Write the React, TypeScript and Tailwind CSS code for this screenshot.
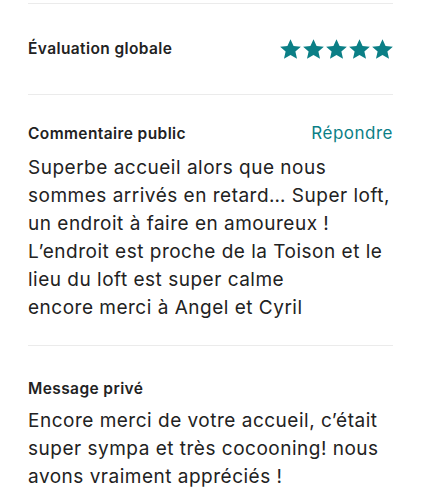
import React from "react";

const font = { fontFamily: "Inter, 'Noto Sans', sans-serif" };

function Star() {
  return (
    <svg viewBox="0 0 24 24" className="w-[23px] h-[23px]" fill="#0b7f86">
      <path d="M12 1.3l3.2 7 7.6.7-5.7 5.1 1.7 7.5L12 17.7l-6.8 3.9 1.7-7.5L1.2 9l7.6-.7z" />
    </svg>
  );
}

function Divider() {
  return <div className="h-px bg-[#ebebeb]" />;
}

const publicComment = [
  "Superbe accueil alors que nous",
  "sommes arrivés en retard… Super loft,",
  "un endroit à faire en amoureux !",
  "L’endroit est proche de la Toison et le",
  "lieu du loft est super calme",
  "encore merci à Angel et Cyril",
];

const privateMessage = [
  "Encore merci de votre accueil, c’était",
  "super sympa et très cocooning! nous",
  "avons vraiment appréciés !",
];

export default function App() {
  return (
    <div className="w-[421px] h-[500px] bg-white px-[28px] pt-[3px] text-[#222222] overflow-hidden" style={font}>
      <Divider />
      <div className="h-[90px] flex items-center justify-between">
        <h2 className="text-[15.5px] font-semibold tracking-[0.4px]">Évaluation globale</h2>
        <div className="flex mr-[-1px]">
          {[0, 1, 2, 3, 4].map((i) => (
            <Star key={i} />
          ))}
        </div>
      </div>
      <Divider />

      <section className="pt-[28px] pb-[23px]">
        <div className="flex items-center justify-between h-[22px]">
          <h2 className="text-[15.5px] font-semibold tracking-[0.4px]">Commentaire public</h2>
          <span className="text-[17px] tracking-[0.5px] text-[#0b7f86]">Répondre</span>
        </div>
        <p className="mt-[9px] text-[19px] leading-[28px] tracking-[0.5px] whitespace-nowrap">
          {publicComment.map((line) => (
            <span key={line} className="block">
              {line}
            </span>
          ))}
        </p>
      </section>
      <Divider />

      <section className="pt-[33px]">
        <h2 className="text-[15.5px] font-semibold tracking-[0.4px] leading-[20px]">Message privé</h2>
        <p className="mt-[8px] text-[19px] leading-[28px] tracking-[0.5px] whitespace-nowrap">
          {privateMessage.map((line) => (
            <span key={line} className="block">
              {line}
            </span>
          ))}
        </p>
      </section>
    </div>
  );
}
